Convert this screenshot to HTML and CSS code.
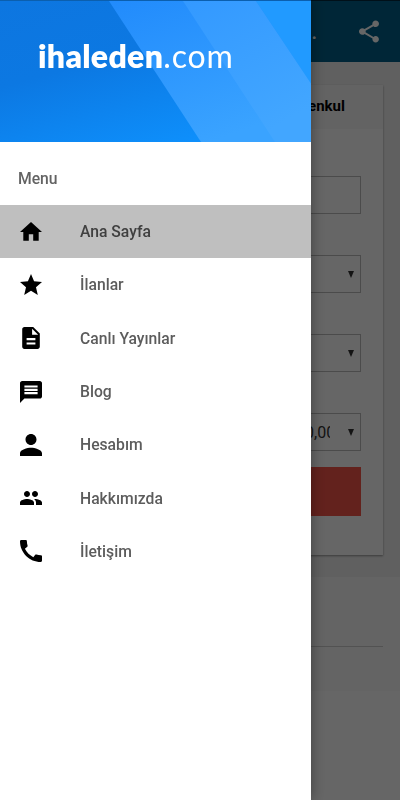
FILE: index.html
```
<!DOCTYPE html>
<html lang="tr">
<head>
    <meta charset="UTF-8">
    <meta name="viewport" content="width=device-width, initial-scale=1.0">
    <title>ihaleden.com</title>
    <link rel="stylesheet" href="styles.css">
</head>
<body>
    <div class="page">
        <header class="toolbar">
            <span class="toolbar-title">...</span>
            <svg class="share" viewBox="3 2 18 20"><path d="M18 16.08c-.76 0-1.44.3-1.96.77L8.91 12.7c.05-.23.09-.46.09-.7s-.04-.47-.09-.7l7.05-4.11c.54.5 1.25.81 2.04.81 1.66 0 3-1.34 3-3s-1.34-3-3-3-3 1.34-3 3c0 .24.04.47.09.7L8.04 9.81C7.5 9.31 6.79 9 6 9c-1.66 0-3 1.34-3 3s1.34 3 3 3c.79 0 1.5-.31 2.04-.81l7.12 4.16c-.05.21-.08.43-.08.65 0 1.61 1.31 2.92 2.92 2.92s2.92-1.31 2.92-2.92-1.31-2.92-2.92-2.92z"/></svg>
        </header>

        <main class="content">
            <div class="card">
                <div class="card-title">Gayrimenkul</div>
                <div class="card-body">
                    <div class="field"></div>
                    <div class="field"><span class="arrow"></span></div>
                    <div class="field"><span class="arrow"></span></div>
                    <div class="field"><span class="price">0,00</span><span class="arrow"></span></div>
                    <div class="search-btn"></div>
                </div>
            </div>
        </main>

        <div class="list">
            <div class="list-head"></div>
            <div class="list-row"></div>
        </div>
    </div>

    <div class="overlay"></div>

    <aside class="drawer">
        <div class="drawer-header">
            <svg class="stripes" viewBox="0 0 311 142" preserveAspectRatio="none">
                <defs>
                    <linearGradient id="base" x1="0" y1="0" x2="0.6" y2="1">
                        <stop offset="0" stop-color="#0d76e0"/>
                        <stop offset="0.45" stop-color="#0c78e2"/>
                        <stop offset="1" stop-color="#0e8ffb"/>
                    </linearGradient>
                    <linearGradient id="band" x1="0" y1="0" x2="0.5" y2="1">
                        <stop offset="0" stop-color="#218bfc"/>
                        <stop offset="1" stop-color="#3aa3ff"/>
                    </linearGradient>
                    <linearGradient id="light" x1="0" y1="0" x2="0.5" y2="1">
                        <stop offset="0" stop-color="#3399ff"/>
                        <stop offset="1" stop-color="#42a6ff"/>
                    </linearGradient>
                </defs>
                <rect width="311" height="142" fill="url(#base)"/>
                <path d="M109 0H311V142H201z" fill="url(#band)"/>
                <path d="M183 0H256L311 83V142H275z" fill="url(#light)"/>
                <path d="M256 0H311V83z" fill="#219aff"/>
            </svg>
            <div class="logo"><b>ihaleden</b><span>.com</span></div>
        </div>

        <div class="menu-title">Menu</div>
        <nav class="menu">
            <a class="item active">
                <svg viewBox="2 2 20 20"><path d="M10 20v-6h4v6h5v-8h3L12 3 2 12h3v8z"/></svg>
                <span>Ana Sayfa</span>
            </a>
            <a class="item">
                <svg viewBox="2 2 20 20"><path d="M12 17.27L18.18 21l-1.64-7.03L22 9.24l-7.19-.61L12 2 9.19 8.63 2 9.24l5.46 4.73L5.82 21z"/></svg>
                <span>İlanlar</span>
            </a>
            <a class="item">
                <svg viewBox="2 2 20 20"><path d="M14 2H6c-1.1 0-1.99.9-1.99 2L4 20c0 1.1.89 2 1.99 2H18c1.1 0 2-.9 2-2V8l-6-6zm2 16H8v-2h8v2zm0-4H8v-2h8v2zm-3-5V3.5L18.5 9H13z"/></svg>
                <span>Canlı Yayınlar</span>
            </a>
            <a class="item">
                <svg viewBox="2 2 20 20"><path d="M20 2H4c-1.1 0-1.99.9-1.99 2L2 22l4-4h14c1.1 0 2-.9 2-2V4c0-1.1-.9-2-2-2zm-2 12H6v-2h12v2zm0-3H6V9h12v2zm0-3H6V6h12v2z"/></svg>
                <span>Blog</span>
            </a>
            <a class="item">
                <svg viewBox="4 4 16 16"><path d="M12 12c2.21 0 4-1.79 4-4s-1.79-4-4-4-4 1.79-4 4 1.79 4 4 4zm0 2c-2.67 0-8 1.34-8 4v2h16v-2c0-2.66-5.33-4-8-4z"/></svg>
                <span>Hesabım</span>
            </a>
            <a class="item">
                <svg viewBox="1 1 22 22"><path d="M16 11c1.66 0 2.99-1.34 2.99-3S17.66 5 16 5c-1.66 0-3 1.34-3 3s1.34 3 3 3zm-8 0c1.66 0 2.99-1.34 2.99-3S9.66 5 8 5C6.34 5 5 6.34 5 8s1.34 3 3 3zm0 2c-2.33 0-7 1.17-7 3.5V19h14v-2.5c0-2.33-4.67-3.5-7-3.5zm8 0c-.29 0-.62.02-.97.05 1.16.84 1.97 1.97 1.97 3.45V19h6v-2.5c0-2.33-4.67-3.5-7-3.5z"/></svg>
                <span>Hakkımızda</span>
            </a>
            <a class="item">
                <svg viewBox="3 3 18 18"><path d="M20.01 15.38c-1.23 0-2.42-.2-3.53-.56-.35-.12-.74-.03-1.01.24l-1.57 1.97c-2.83-1.35-5.48-3.9-6.89-6.83l1.95-1.66c.27-.28.35-.67.24-1.02-.37-1.11-.56-2.3-.56-3.53 0-.54-.45-.99-.99-.99H4.19C3.65 3 3 3.24 3 3.99 3 13.28 10.73 21 20.01 21c.71 0 .99-.63.99-1.18v-3.45c0-.54-.45-.99-.99-.99z"/></svg>
                <span>İletişim</span>
            </a>
        </nav>
    </aside>
</body>
</html>
```
FILE: styles.css
```
* {
    box-sizing: border-box;
    margin: 0;
    padding: 0;
}

body {
    height: 800px;
    overflow: hidden;
    background: #fff;
    font-family: Roboto, "Noto Sans", sans-serif;
}

/* page under the drawer */
.page {
    height: 800px;
}

.toolbar {
    display: flex;
    align-items: center;
    justify-content: flex-end;
    gap: 42px;
    height: 62px;
    padding-right: 21px;
    background: #006089;
    border-top: 1px solid #002a40;
    color: #fff;
}

.toolbar-title {
    font-size: 20px;
    font-weight: 500;
}

.share {
    width: 20px;
    height: 23px;
    fill: #fff;
}

.content {
    height: 515px;
    padding: 23px 17px 0;
    background: #f0f0f0;
}

.card {
    height: 470px;
    background: #fff;
    box-shadow: 0 1px 2px rgba(0, 0, 0, 0.4);
}

.card-title {
    height: 44px;
    padding-right: 38px;
    background: #f7f7f7;
    font-size: 15px;
    font-weight: bold;
    line-height: 43px;
    text-align: right;
}

.card-body {
    display: flex;
    flex-direction: column;
    gap: 41px;
    padding: 47px 22px 0;
}

.field {
    display: flex;
    align-items: center;
    justify-content: flex-end;
    height: 38px;
    padding-right: 6px;
    border: 1px solid #bbb;
}

.price {
    width: 25px;
    margin-right: 18px;
    overflow: hidden;
    color: #333;
    font-size: 16px;
}

.arrow {
    border: 3.5px solid transparent;
    border-top: 7px solid #333;
    border-bottom: 0;
}

.search-btn {
    height: 49px;
    margin-top: -25px;
    background: #f85549;
}

.list-head {
    height: 70px;
    margin-right: 17px;
    border-bottom: 1px solid #ccc;
}

.list {
    height: 114px;
    background: #f9f9f9;
}

.overlay {
    position: fixed;
    inset: 0;
    background: rgba(0, 0, 0, 0.6);
}

/* drawer */
.drawer {
    position: fixed;
    top: 0;
    left: 0;
    width: 311px;
    height: 800px;
    background: #fff;
    box-shadow: 0 0 14px rgba(0, 0, 0, 0.4);
}

.drawer-header {
    position: relative;
    height: 142px;
    padding: 36px 0 0 38px;
    border-top: 1px solid #0b5fae;
}

.stripes {
    position: absolute;
    top: 0;
    left: 0;
    width: 311px;
    height: 141px;
}

.logo {
    position: relative;
    color: #fff;
    font-family: Lato, sans-serif;
    font-size: 32px;
    line-height: 38px;
    white-space: nowrap;
}

.logo b {
    font-weight: 800;
    letter-spacing: 0.3px;
}

.logo span {
    font-weight: 400;
    letter-spacing: 0.9px;
}

.menu-title {
    height: 63px;
    padding: 9px 18px 0;
    color: #636363;
    font-size: 15.7px;
    font-weight: 500;
    line-height: 55px;
}

.item {
    display: flex;
    align-items: center;
    gap: 38px;
    height: 53.3px;
    padding-left: 20px;
    color: #5c5c5c;
    font-size: 15.7px;
    font-weight: 500;
}

.item svg {
    width: 22px;
    height: 22px;
    fill: #000;
}

.item.active {
    background: #bfbfbf;
    color: #404040;
}
```
